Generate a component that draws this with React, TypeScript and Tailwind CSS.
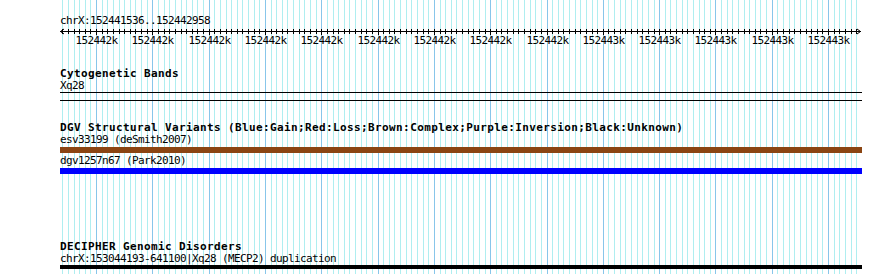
import React from "react";

const START = 152441536;
const END = 152442958;
const LEFT = 60;
const SCALE = 0.5631;

const toX = (bp: number) => Math.round(LEFT + (bp - START) * SCALE);

type Tick = { bp: number; x: number; major: boolean };

const ticks: Tick[] = [];
for (let bp = Math.ceil(START / 10) * 10; bp <= END; bp += 10) {
  ticks.push({ bp, x: toX(bp), major: bp % 100 === 0 });
}

const mono = "font-['DejaVu_Sans_Mono',monospace]";
const label = `${mono} text-[11px] leading-[12px] tracking-[-0.62px] text-black whitespace-nowrap`;
const heading = `${mono} text-[11px] leading-[12px] tracking-[0.38px] font-bold text-black whitespace-nowrap`;

const Grid = () => (
  <svg className="absolute inset-0" width={890} height={274} shapeRendering="crispEdges">
    {ticks.map((t) => (
      <line
        key={t.bp}
        x1={t.x + 0.5}
        x2={t.x + 0.5}
        y1={0}
        y2={274}
        stroke={t.major ? "#88c6ea" : "#afeef0"}
        strokeWidth={1}
      />
    ))}
  </svg>
);

const Ruler = () => {
  const right = toX(END) - LEFT;
  return (
    <svg width={802} height={20} className="block overflow-visible" shapeRendering="crispEdges">
      <line x1={0} x2={right} y1={4.5} y2={4.5} stroke="#000" />
      <polyline points={`4,2 0.5,4.5 4,7`} fill="none" stroke="#000" shapeRendering="auto" />
      <polyline points={`${right - 4},2 ${right - 0.5},4.5 ${right - 4},7`} fill="none" stroke="#000" shapeRendering="auto" />
      {ticks.map((t) => (
        <line key={t.bp} x1={t.x - LEFT + 0.5} x2={t.x - LEFT + 0.5} y1={2} y2={t.major ? 8 : 7} stroke="#000" />
      ))}
      {ticks
        .filter((t) => t.major)
        .map((t) => (
          <text
            key={t.bp}
            x={t.x - LEFT + 0.5}
            y={16.5}
            textAnchor="middle"
            fontFamily="DejaVu Sans Mono, monospace"
            fontSize={11}
            letterSpacing={-0.62}
            fill="#000"
          >
            {Math.round(t.bp / 1000)}k
          </text>
        ))}
    </svg>
  );
};

export default function App() {
  return (
    <div className="relative w-[890px] h-[274px] bg-white overflow-hidden">
      <Grid />
      <div className="relative flex flex-col pl-[60px] pt-[15px]">
        <div className={label}>chrX:152441536..152442958</div>
        <Ruler />

        {/* Cytogenetic Bands */}
        <div className="mt-[21px] flex flex-col">
          <div className={heading}>Cytogenetic Bands</div>
          <div className={label}>Xq28</div>
          <div className="w-[802px] h-[9px] border-y border-black" />
        </div>

        {/* DGV */}
        <div className="mt-[21px] flex flex-col">
          <div className={heading}>
            DGV Structural Variants (Blue:Gain;Red:Loss;Brown:Complex;Purple:Inversion;Black:Unknown)
          </div>
          <div className={label}>esv33199 (deSmith2007)</div>
          <div className="mt-[1px] w-[802px] h-[6px] bg-[#8b4513]" />
          <div className={`${label} mt-[2px]`}>dgv1257n67 (Park2010)</div>
          <div className="mt-[1px] w-[802px] h-[6px] bg-[#0000ff]" />
        </div>

        {/* DECIPHER */}
        <div className="mt-[67px] flex flex-col">
          <div className={heading}>DECIPHER Genomic Disorders</div>
          <div className={label}>chrX:153044193-641100|Xq28 (MECP2) duplication</div>
          <div className="w-[802px] h-[4px] bg-black" />
        </div>
      </div>
    </div>
  );
}
